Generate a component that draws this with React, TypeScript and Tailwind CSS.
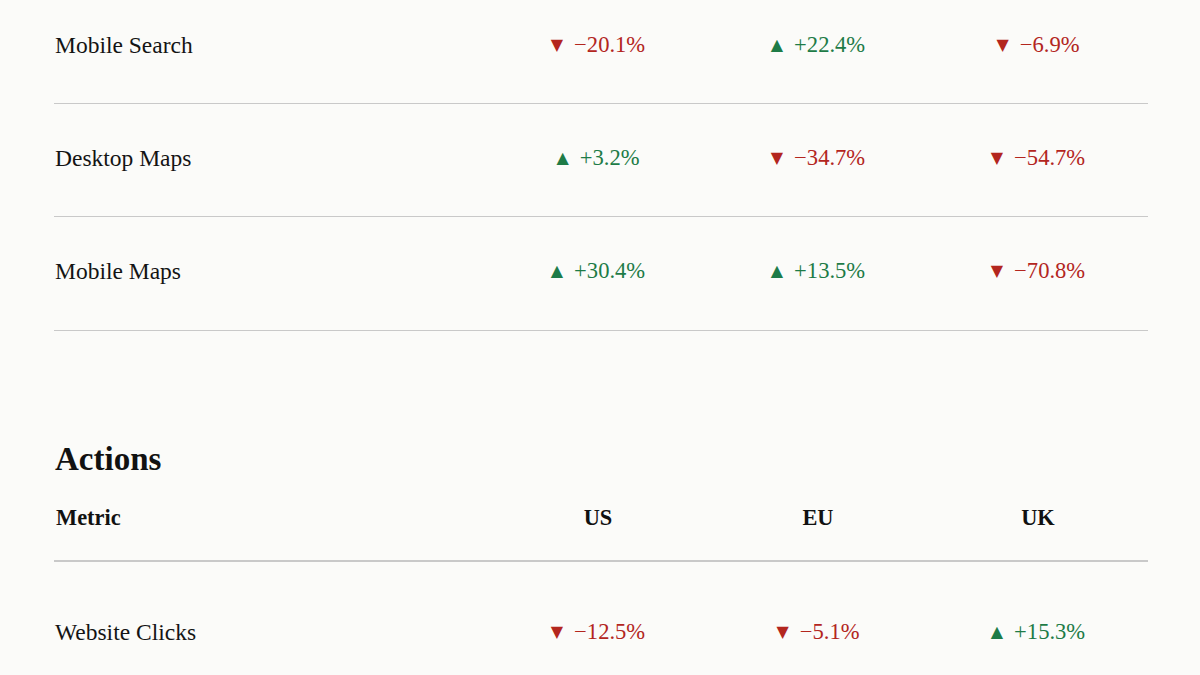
import React from "react";

type Val = { v: string; up: boolean };
type Row = { label: string; vals: Val[] };

const RED = "text-[#b3261e]";
const GREEN = "text-[#1e7b47]";

function Value({ v, up }: Val) {
  return (
    <div className={`w-[220px] flex items-center justify-center text-[22.6px] leading-[28px] ${up ? GREEN : RED}`}>
      <span className="text-[16px] mr-[11px]" style={{ fontFamily: '"DejaVu Sans", sans-serif' }}>
        {up ? "▲" : "▼"}
      </span>
      <span>{v}</span>
    </div>
  );
}

function DataRow({ row, pad }: { row: Row; pad: string }) {
  return (
    <div className={`flex items-center border-b border-[#c9c9c9] ${pad}`}>
      <div className="flex-1 pl-px text-[23.5px] leading-[28px] text-[#141414]">{row.label}</div>
      {row.vals.map((x, i) => (
        <Value key={i} {...x} />
      ))}
    </div>
  );
}

const top: Row[] = [
  { label: "Mobile Search", vals: [{ v: "−20.1%", up: false }, { v: "+22.4%", up: true }, { v: "−6.9%", up: false }] },
  { label: "Desktop Maps", vals: [{ v: "+3.2%", up: true }, { v: "−34.7%", up: false }, { v: "−54.7%", up: false }] },
  { label: "Mobile Maps", vals: [{ v: "+30.4%", up: true }, { v: "+13.5%", up: true }, { v: "−70.8%", up: false }] },
];

const actions: Row[] = [
  { label: "Website Clicks", vals: [{ v: "−12.5%", up: false }, { v: "−5.1%", up: false }, { v: "+15.3%", up: true }] },
];

export default function App() {
  return (
    <div
      className="w-[1200px] h-[675px] overflow-hidden bg-[#fbfbf9] pl-[54px] pr-[52px] text-[#141414]"
      style={{ fontFamily: '"Liberation Serif", "Times New Roman", serif' }}
    >
      <div className="flex flex-col">
        <DataRow row={top[0]} pad="pt-[31px] pb-[44px]" />
        <DataRow row={top[1]} pad="pt-[40px] pb-[44px]" />
        <DataRow row={top[2]} pad="pt-[40px] pb-[45px]" />
      </div>

      <h2 className="mt-[109px] pl-px text-[33px] leading-[38px] font-bold text-[#111]">Actions</h2>

      <div className="mt-[26px] flex items-center border-b-2 border-[#c9c9c9] pb-[28px] font-bold text-[22.4px] leading-[28px] text-[#111]">
        <div className="flex-1 pl-[2px]">Metric</div>
        <div className="w-[220px] text-center">US</div>
        <div className="w-[220px] text-center">EU</div>
        <div className="w-[220px] text-center">UK</div>
      </div>

      <div className="flex flex-col">
        <DataRow row={actions[0]} pad="pt-[56px] pb-[44px]" />
      </div>
    </div>
  );
}
